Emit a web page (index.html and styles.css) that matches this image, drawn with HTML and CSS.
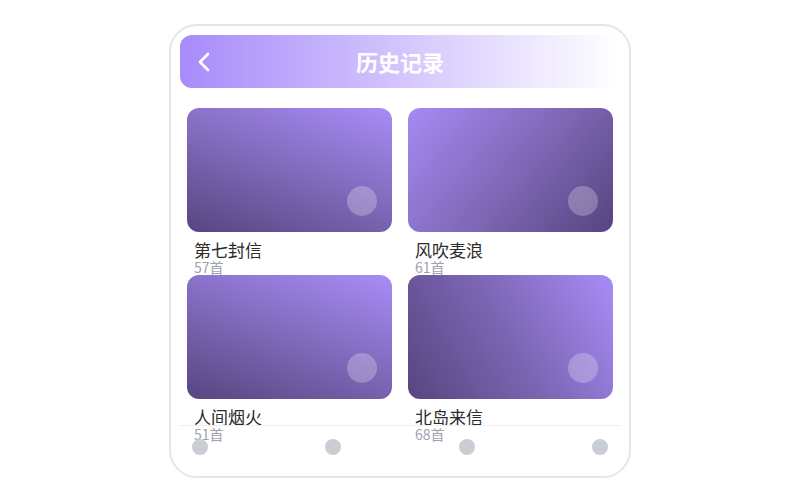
FILE: index.html
```html
<!DOCTYPE html>
<html lang="zh">
<head>
<meta charset="utf-8">
<link rel="stylesheet" href="styles.css">
</head>
<body>
<div class="phone">
  <header class="topbar">
    <div class="back">
      <svg width="14" height="22" viewBox="0 0 14 22"><polyline points="11,3 3,11 11,19" fill="none" stroke="#fff" stroke-width="2.6" stroke-linecap="round" stroke-linejoin="round"/></svg>
    </div>
    <div class="title">历史记录</div>
    <div></div>
  </header>
  <div class="grid">
    <div class="item">
      <div class="cover g1"><span class="dot"></span></div>
      <div class="name">第七封信</div>
      <div class="count">57首</div>
    </div>
    <div class="item">
      <div class="cover g2"><span class="dot"></span></div>
      <div class="name">风吹麦浪</div>
      <div class="count">61首</div>
    </div>
    <div class="item">
      <div class="cover g3"><span class="dot"></span></div>
      <div class="name">人间烟火</div>
      <div class="count">51首</div>
    </div>
    <div class="item">
      <div class="cover g4"><span class="dot"></span></div>
      <div class="name">北岛来信</div>
      <div class="count">68首</div>
    </div>
  </div>
  <nav class="tabbar">
    <span class="tab"></span>
    <span class="tab"></span>
    <span class="tab"></span>
    <span class="tab"></span>
  </nav>
</div>
</body>
</html>
```

FILE: styles.css
```css
* { box-sizing: border-box; }
html, body { margin: 0; padding: 0; background: #fff; }
body {
  font-family: "Noto Sans CJK SC", "Noto Sans", sans-serif;
  display: flex;
  justify-content: center;
  padding-top: 24px;
}
.phone {
  position: relative;
  width: 462px;
  height: 454px;
  border: 2px solid #e6e6ea;
  border-radius: 28px;
  padding: 9px 9px 0;
  overflow: hidden;
  background: #fff;
}
.topbar {
  height: 53px;
  border-radius: 12px;
  background: linear-gradient(90deg, #a78bfa 0%, #ffffff 100%);
  display: grid;
  grid-template-columns: 1fr auto 1fr;
  align-items: center;
}
.back {
  padding-left: 17px;
  display: flex;
  align-items: center;
  height: 22px;
}
.back svg { display: block; }
.title {
  color: #fff;
  font-size: 22px;
  font-weight: 700;
  line-height: 1;
  margin-top: -2px;
}
.grid {
  margin-top: 20px;
  padding: 0 7px;
  display: grid;
  grid-template-columns: 205px 205px;
  column-gap: 16px;
  row-gap: 16px;
}
.item {
  height: 151px;
}
.cover {
  height: 124px;
  border-radius: 12px;
  display: flex;
  justify-content: flex-end;
  align-items: flex-end;
  padding: 0 15px 16px 0;
}
.g1 { background: linear-gradient(200deg, #a88cf7 0%, #806abb 50%, #564680 100%); }
.g2 { background: linear-gradient(130deg, #a68af4 0%, #7d66b3 55%, #55457f 100%); }
.g3 { background: linear-gradient(200deg, #a88cf7 0%, #806abb 50%, #564680 100%); }
.g4 { background: linear-gradient(60deg, #564680 0%, #7c66b4 50%, #a88cf7 100%); }
.dot {
  width: 30px;
  height: 30px;
  border-radius: 50%;
  background: rgba(255, 255, 255, 0.25);
}
.name {
  margin-top: 8px;
  padding-left: 7px;
  font-size: 17px;
  line-height: 20px;
  color: #2b2b2b;
}
.count {
  padding-left: 7px;
  font-size: 14px;
  line-height: 15px;
  color: #9ca3af;
}
.tabbar {
  position: absolute;
  left: 9px;
  right: 9px;
  bottom: 0;
  height: 51px;
  border-top: 1px solid #eeeef0;
  padding: 13px 12px 0;
  display: flex;
  justify-content: space-between;
  align-items: flex-start;
}
.tab {
  width: 16px;
  height: 16px;
  border-radius: 50%;
  background: #c9cdd4;
}
```
